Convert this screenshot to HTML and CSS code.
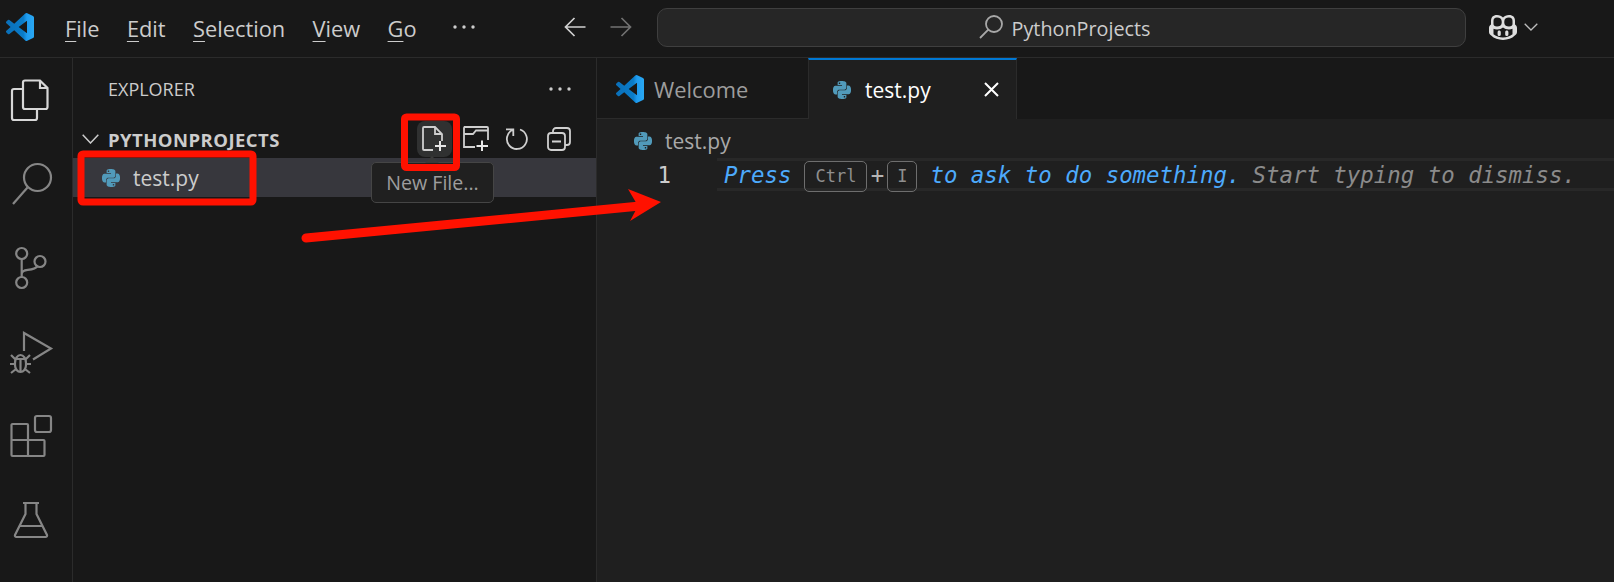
FILE: index.html
```html
<!DOCTYPE html>
<html lang="en">
<head>
<meta charset="utf-8">
<title>PythonProjects</title>
<link rel="stylesheet" href="styles.css">
</head>
<body>
<svg class="defs" aria-hidden="true">
  <defs>
    <linearGradient id="vsg" x1="0" x2="1" y1="0" y2="0"><stop offset="0" stop-color="#0a6fb8"/><stop offset=".62" stop-color="#0a7cc9"/><stop offset=".75" stop-color="#1f9cf0"/><stop offset="1" stop-color="#2aa8f2"/></linearGradient>
    <symbol id="vscode" viewBox="0 0 24 24"><path fill="url(#vsg)" d="M23.15 2.587L18.21.21a1.494 1.494 0 0 0-1.705.29l-9.46 8.63-4.12-3.128a.999.999 0 0 0-1.276.057L.327 7.261A1 1 0 0 0 .326 8.74L3.899 12 .326 15.26a1 1 0 0 0 .001 1.479L1.65 17.94a.999.999 0 0 0 1.276.057l4.12-3.128 9.46 8.63a1.492 1.492 0 0 0 1.704.29l4.942-2.377A1.5 1.5 0 0 0 24 20.06V3.939a1.5 1.5 0 0 0-.85-1.352zm-5.146 14.861L10.826 12l7.178-5.448v10.896z"/></symbol>
    <symbol id="python" viewBox="0 0 24 24"><path fill="#519aba" d="M14.25.18l.9.2.73.26.59.3.45.32.34.34.25.34.16.33.1.3.04.26.02.2-.01.13V8.5l-.05.63-.13.55-.21.46-.26.38-.3.31-.33.25-.35.19-.35.14-.33.1-.3.07-.26.04-.21.02H8.77l-.69.05-.59.14-.5.22-.41.27-.33.32-.27.35-.2.36-.15.37-.1.35-.07.32-.04.27-.02.21v3.06H3.17l-.21-.03-.28-.07-.32-.12-.35-.18-.36-.26-.36-.36-.35-.46-.32-.59-.28-.73-.21-.88-.14-1.05-.05-1.23.06-1.22.16-1.04.24-.87.32-.71.36-.57.4-.44.42-.33.42-.24.4-.16.36-.1.32-.05.24-.01h.16l.06.01h8.16v-.83H6.18l-.01-2.75-.02-.37.05-.34.11-.31.17-.28.25-.26.31-.23.38-.2.44-.18.51-.15.58-.12.64-.1.71-.06.77-.04.84-.02 1.27.05zm-6.3 1.98l-.23.33-.08.41.08.41.23.34.33.22.41.09.41-.09.33-.22.23-.34.08-.41-.08-.41-.23-.33-.33-.22-.41-.09-.41.09zm13.09 3.95l.28.06.32.12.35.18.36.27.36.35.35.47.32.59.28.73.21.88.14 1.04.05 1.23-.06 1.23-.16 1.04-.24.86-.32.71-.36.57-.4.45-.42.33-.42.24-.4.16-.36.09-.32.05-.24.02-.16-.01h-8.22v.82h5.84l.01 2.76.02.36-.05.34-.11.31-.17.29-.25.25-.31.24-.38.2-.44.17-.51.15-.58.13-.64.09-.71.07-.77.04-.84.01-1.27-.04-1.07-.14-.9-.2-.73-.25-.59-.3-.45-.33-.34-.34-.25-.34-.16-.33-.1-.3-.04-.25-.02-.2.01-.13v-5.34l.05-.64.13-.54.21-.46.26-.38.3-.32.33-.24.35-.2.35-.14.33-.1.3-.06.26-.04.21-.02.13-.01h5.84l.69-.05.59-.14.5-.21.41-.28.33-.32.27-.35.2-.36.15-.36.1-.35.07-.32.04-.28.02-.21V6.07h2.09l.14.01zm-6.47 14.25l-.23.33-.08.41.08.41.23.33.33.23.41.08.41-.08.33-.23.23-.33.08-.41-.08-.41-.23-.33-.33-.23-.41-.08-.41.08z"/></symbol>
  </defs>
</svg>

<header class="titlebar">
  <div class="title-left">
    <svg class="logo"><use href="#vscode"/></svg>
    <nav class="menu">
      <span class="menu-item"><u>F</u>ile</span>
      <span class="menu-item"><u>E</u>dit</span>
      <span class="menu-item"><u>S</u>election</span>
      <span class="menu-item"><u>V</u>iew</span>
      <span class="menu-item"><u>G</u>o</span>
      <svg class="menu-more" viewBox="0 0 22 6"><circle cx="2" cy="3" r="1.7"/><circle cx="11" cy="3" r="1.7"/><circle cx="20" cy="3" r="1.7"/></svg>
    </nav>
    <div class="nav-arrows">
      <svg class="arrow-icon" viewBox="0 0 22 20"><path d="M21.5 10H1.5M10.5 1L1.5 10l9 9"/></svg>
      <svg class="arrow-icon dim" viewBox="0 0 22 20"><path d="M.5 10h20M11.5 1l9 9-9 9"/></svg>
    </div>
  </div>
  <div class="searchbox">
    <svg class="search-mini" viewBox="0 0 24 24"><circle cx="15" cy="9" r="8"/><path d="M9.3 14.7L1 23"/></svg>
    <span class="search-text">PythonProjects</span>
  </div>
  <div class="title-right">
    <svg class="copilot" viewBox="0 0 28 25"><path fill-rule="evenodd" d="M8 0c2.6 0 4.6.9 6 2.6C15.4.9 17.4 0 20 0c4 0 6 2.2 6 6v3.5c1.3.8 2 2 2 3.5v4c0 1.500-.8 2.700-2.200 3.600C23 23.500 18.800 25 14 25S5 23.500 2.200 20.600C.8 19.700 0 18.500 0 17v-4c0-1.500.7-2.700 2-3.500V6c0-3.800 2-6 6-6zM8 2.500C5.500 2.500 4.500 3.800 4.500 6v3c0 1.600 1.100 2.500 3.500 2.500s4.700-1 4.700-3.500V6.500C12.700 3.800 11 2.500 8 2.500zm12 0c-3 0-4.700 1.300-4.700 4V8c0 2.500 2.300 3.500 4.700 3.500s3.500-.9 3.500-2.500V6c0-2.200-1-3.500-3.500-3.500zM14 12.600c-1.400 1.300-3.600 1.800-6 1.800-1.400 0-2.500-.2-3.500-.7v5.500c2.200 1.900 5.800 3.300 9.500 3.300s7.300-1.400 9.500-3.300v-5.500c-1 .5-2.100.7-3.500.7-2.400 0-4.600-.5-6-1.800zM10.200 15.500c.9 0 1.600.7 1.600 1.600v2.300a1.600 1.600 0 0 1-3.200 0v-2.300c0-.9.7-1.600 1.600-1.600zm7.600 0c.9 0 1.600.7 1.600 1.600v2.300a1.600 1.600 0 0 1-3.200 0v-2.300c0-.9.7-1.600 1.600-1.600z"/></svg>
    <svg class="chev-small" viewBox="0 0 14 8"><path d="M.7.7L7 7l6.300-6.300"/></svg>
  </div>
</header>

<div class="workbench">
  <aside class="activity">
    <div class="act-item"><svg class="act-icon active" viewBox="0 0 42 42"><path d="M15 1.500h15L37.500 9v19a2 2 0 0 1-2 2H15a2 2 0 0 1-2-2V3.500a2 2 0 0 1 2-2zM30 1.500V9h7.500"/><path d="M13 10H4a2 2 0 0 0-2 2v27a2 2 0 0 0 2 2h21a2 2 0 0 0 2-2v-9"/></svg></div>
    <div class="act-item"><svg class="act-icon" viewBox="0 0 42 42"><circle cx="27.500" cy="14.500" r="13.500"/><path d="M17.500 24.500L3 41"/></svg></div>
    <div class="act-item"><svg class="act-icon" viewBox="0 0 42 42"><circle cx="11.700" cy="6.500" r="5.500"/><circle cx="11.700" cy="35.500" r="5.500"/><circle cx="30" cy="14.500" r="5.500"/><path d="M11.700 12v18M11.700 27c0-3 2-3.800 6-4.200 5-.5 8.300-1 9.500-3.600"/></svg></div>
    <div class="act-item"><svg class="act-icon" viewBox="0 0 42 42"><path d="M14 20V2l27 15.500-18 11"/><path d="M5 32a5.500 8 0 0 1 11 0v2a5.500 7 0 0 1-11 0zM5.500 28h10M1 24l4 4M20 24l-4 4M0 33h5M16 33h5M1 42l5-4M20 42l-5-4M10.500 28v13"/></svg></div>
    <div class="act-item"><svg class="act-icon" viewBox="0 0 42 42"><rect x="25" y="1" width="16" height="16" rx="2"/><path d="M18 25h15.500a1 1 0 0 1 1 1v14a1 1 0 0 1-1 1H2.500a1 1 0 0 1-1-1V10a1 1 0 0 1 1-1H17a1 1 0 0 1 1 1zM1.500 25H18v16"/></svg></div>
    <div class="act-item"><svg class="act-icon" viewBox="0 0 42 42"><path d="M13 4h16M15.500 4v11L5 36a1.500 1.500 0 0 0 1.400 2h29.200a1.500 1.500 0 0 0 1.400-2L26.500 15V4M10 27h22"/></svg></div>
  </aside>

  <section class="sidebar">
    <div class="side-head">
      <span class="side-title">EXPLORER</span>
      <svg class="side-more" viewBox="0 0 22 6"><circle cx="2" cy="3" r="1.700"/><circle cx="11" cy="3" r="1.700"/><circle cx="20" cy="3" r="1.700"/></svg>
    </div>
    <div class="folder-row">
      <svg class="folder-chev" viewBox="0 0 17 10"><path d="M.7.7L8.500 9l7.800-8.300"/></svg>
      <span class="folder-name">PYTHONPROJECTS</span>
      <div class="folder-actions">
        <span class="act-btn hovered"><svg class="tool-icon" viewBox="0 0 26 26"><path d="M12 24H3a1 1 0 0 1-1-1V2a1 1 0 0 1 1-1h11l7 7v7M14 1v7h7"/><path class="plus-bright" d="M19 15v10M14 20h11"/></svg></span>
        <span class="act-btn"><svg class="tool-icon" viewBox="0 0 26 26"><path d="M12 21H1V2a1 1 0 0 1 1-1h22a1 1 0 0 1 1 1v12M1 8h9l3-3.500h12M1 1h9.500"/><path class="plus-bright" d="M19 14.500v10.500M13.500 20H25"/></svg></span>
        <span class="act-btn"><svg class="tool-icon" viewBox="0 0 26 26"><path d="M8.500 4A10 10 0 1 0 16 3.500M2 3.300h7.300V10"/></svg></span>
        <span class="act-btn"><svg class="tool-icon" viewBox="0 0 26 26"><rect x="2" y="7" width="17" height="17" rx="3"/><path d="M7 7V5a3 3 0 0 1 3-3h11a3 3 0 0 1 3 3v11a3 3 0 0 1-3 3h-2M6 15.500h9"/></svg></span>
      </div>
    </div>
    <div class="file-row">
      <svg class="py-icon"><use href="#python"/></svg>
      <span>test.py</span>
    </div>
    <div class="tooltip">New File...</div>
  </section>

  <main class="editor">
    <div class="tabs">
      <div class="tab">
        <svg class="tab-logo"><use href="#vscode"/></svg>
        <span class="tab-label">Welcome</span>
      </div>
      <div class="tab tab-active">
        <svg class="py-icon"><use href="#python"/></svg>
        <span>test.py</span>
        <svg class="tab-close" viewBox="0 0 15 15"><path d="M1 1l13 13M14 1L1 14"/></svg>
      </div>
    </div>
    <div class="crumbs">
      <svg class="py-icon"><use href="#python"/></svg>
      <span>test.py</span>
    </div>
    <div class="code-line">
      <span class="line-no">1</span>
      <div class="line-body">
        <span class="hint-blue">Press</span><kbd class="key key-ctrl">Ctrl</kbd><span class="plus">+</span><kbd class="key key-i">I</kbd><span class="hint-blue hint-rest">to ask to do something.</span><span class="hint-grey">Start typing to dismiss.</span>
      </div>
    </div>
  </main>
</div>

<svg class="annotations" viewBox="0 0 1614 582" aria-hidden="true">
  <rect class="red-box" x="81" y="154" width="172" height="48" rx="2"/>
  <rect class="red-box" x="404.500" y="117" width="52" height="50.500" rx="2"/>
  <path class="red-line" d="M306 238L640 206"/>
  <path class="red-head" d="M628 189L661 202 630 221 638 206z"/>
</svg>
</body>
</html>
```
FILE: styles.css
```css
* { box-sizing: border-box; }
html, body { margin: 0; padding: 0; }
body {
  width: 1614px;
  height: 582px;
  overflow: hidden;
  position: relative;
  background: #181818;
  color: #cccccc;
  font-family: "Open Sans", "Noto Sans", sans-serif;
  font-size: 20px;
}
.defs { position: absolute; width: 0; height: 0; }

.titlebar {
  height: 58px;
  display: grid;
  grid-template-columns: 657px 809px 1fr;
  align-items: center;
  border-bottom: 1px solid #2b2b2b;
  padding-bottom: 3px;
}
.title-left { display: flex; align-items: center; padding-left: 6px; padding-right: 25px; }
.logo { width: 28px; height: 28px; flex: none; }
.menu { display: flex; align-items: center; gap: 27.400px; margin-left: 31px; padding-top: 2px; font-size: 21.800px; color: #cccccc; }
.menu-item u { text-underline-offset: 4px; text-decoration-thickness: 1px; }
.menu-more { width: 22px; height: 6px; fill: #cccccc; margin-left: 9px; margin-top: -2px; }
.nav-arrows { display: flex; gap: 24px; margin-left: auto; }
.arrow-icon { width: 22px; height: 20px; fill: none; stroke: #d0d0d0; stroke-width: 1.700; }
.arrow-icon.dim { stroke: #717171; }

.searchbox {
  height: 39px;
  background: #262626;
  border: 1px solid #3f3f3f;
  border-radius: 10px;
  display: flex;
  align-items: center;
  justify-content: center;
  gap: 9px;
  color: #cccccc;
  padding-left: 6px;
}
.search-text { padding-top: 2px; font-size: 19.800px; }
.search-mini { width: 24px; height: 24px; fill: none; stroke: #a8a8a8; stroke-width: 1.800; }

.title-right { display: flex; align-items: center; gap: 7px; padding-left: 23px; }
.copilot { width: 28px; height: 25px; fill: #dedede; }
.chev-small { width: 14px; height: 8px; fill: none; stroke: #bdbdbd; stroke-width: 1.300; }

.workbench { display: flex; height: 524px; }

.activity { width: 73px; flex: none; border-right: 1px solid #2b2b2b; display: flex; flex-direction: column; }
.act-item { height: 84px; display: flex; align-items: center; padding-left: 10px; }
.act-icon { width: 42px; height: 42px; fill: none; stroke: #868686; stroke-width: 2.200; overflow: visible; }
.act-icon.active { stroke: #d7d7d7; }

.sidebar { width: 524px; flex: none; position: relative; border-right: 1px solid #2b2b2b; }
.side-head { height: 62px; display: flex; align-items: center; padding: 0 25px 0 35px; justify-content: space-between; }
.side-title { font-size: 18px; color: #cccccc; }
.side-more { width: 22px; height: 6px; fill: #cccccc; }

.folder-row { height: 38px; display: flex; align-items: center; padding: 0 20px 0 9px; }
.folder-chev { width: 17px; height: 10px; fill: none; stroke: #cccccc; stroke-width: 1.500; flex: none; }
.folder-name { margin-left: 9px; font-size: 18.500px; letter-spacing: .45px; font-weight: 700; color: #cccccc; }
.folder-actions { margin-left: auto; display: flex; gap: 6.500px; }
.act-btn { width: 35px; height: 36px; border-radius: 8px; display: flex; align-items: center; justify-content: center; }
.act-btn.hovered { background: #303131; }
.tool-icon { width: 26px; height: 26px; fill: none; stroke: #cfcfcf; stroke-width: 1.800; }
.plus-bright { stroke: #e6e6e6; stroke-width: 2; }

.file-row { height: 39px; display: flex; align-items: center; gap: 13px; padding-left: 29px; background: #37373d; color: #cccccc; font-size: 21px; }
.py-icon { width: 18px; height: 18px; flex: none; }

.tooltip {
  position: absolute;
  left: 298px;
  top: 104px;
  width: 123px;
  height: 41px;
  background: #202020;
  border: 1px solid #454545;
  border-radius: 5px;
  display: flex;
  align-items: center;
  justify-content: center;
  color: #9d9d9d;
  font-size: 19.600px;
}
.tooltip::before {
  content: "";
  position: absolute;
  left: 53px;
  top: -7px;
  width: 0;
  height: 0;
  border-left: 7px solid transparent;
  border-right: 7px solid transparent;
  border-bottom: 7px solid #3a3a3a;
}

.editor { flex: 1; background: #1f1f1f; min-width: 0; }
.tabs { height: 61px; display: flex; background: #181818; }
.tab { width: 211px; height: 61px; display: flex; align-items: center; gap: 10px; padding-left: 19px; color: #9d9d9d; font-size: 21.900px; border-bottom: 1px solid #2b2b2b; }
.tab-label { padding-top: 3px; }
.tab-logo { width: 28px; height: 28px; flex: none; margin-top: 2px; }
.tab-active {
  width: 209px;
  background: #1f1f1f;
  color: #ffffff;
  font-size: 21px;
  border-top: 2px solid #0078d4;
  border-left: 1px solid #2b2b2b;
  border-right: 1px solid #2b2b2b;
  border-bottom: 0;
  padding-left: 24px;
  gap: 14px;
}
.tab-close { width: 15px; height: 15px; fill: none; stroke: #ffffff; stroke-width: 2; margin-left: auto; margin-right: 17px; }

.crumbs { height: 39px; display: flex; align-items: center; gap: 13px; padding-left: 37px; padding-top: 5px; color: #a9a9a9; font-size: 21px; }

.code-line { height: 33px; display: flex; font-family: "DejaVu Sans Mono", "Liberation Mono", monospace; font-size: 22.400px; }
.line-no { width: 120px; flex: none; text-align: right; padding-right: 46px; color: #cccccc; line-height: 34px; }
.line-body {
  flex: 1;
  border-top: 3px solid #282828;
  border-bottom: 3px solid #282828;
  display: flex;
  align-items: center;
  padding-left: 7px;
  font-style: italic;
  white-space: pre;
}
.hint-blue { color: #4daafc; padding-top: 1px; }
.hint-rest { margin-left: 13px; }
.hint-grey { color: #8b8b8b; margin-left: 12px; padding-top: 1px; }
.key {
  font-family: "DejaVu Sans Mono", "Liberation Mono", monospace;
  font-style: normal;
  font-size: 17px;
  color: #8f8f8f;
  height: 31px;
  border: 1px solid #6e6e6e;
  border-radius: 5px;
  display: flex;
  align-items: center;
  justify-content: center;
  margin-bottom: -3px;
}
.key-ctrl { width: 63px; margin-left: 13px; }
.key-i { width: 30px; }
.plus { width: 20px; text-align: center; font-style: normal; color: #b5b5b5; }

.annotations { position: absolute; left: 0; top: 0; width: 1614px; height: 582px; pointer-events: none; }
.red-box { fill: none; stroke: #ff1100; stroke-width: 7; }
.red-line { fill: none; stroke: #ff1100; stroke-width: 9; stroke-linecap: round; }
.red-head { fill: #ff1100; }
```
